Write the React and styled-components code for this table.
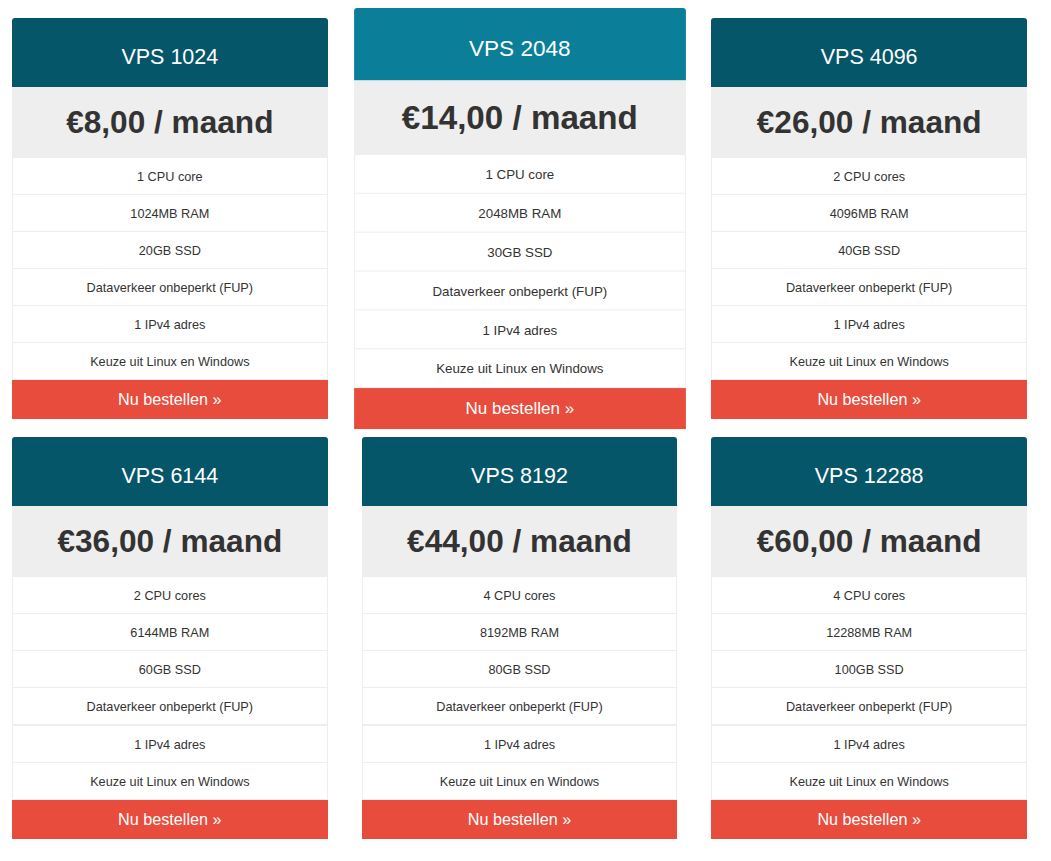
import React from "react";
import styled, { createGlobalStyle } from "styled-components";

const GlobalStyle = createGlobalStyle`
  html, body {
    margin: 0;
    padding: 0;
    background: #ffffff;
  }
  body {
    font-family: "Liberation Sans", Arial, Helvetica, sans-serif;
    color: #333333;
  }
`;

const Page = styled.div`
  width: 1051px;
  box-sizing: border-box;
  padding: 18px 24px 0 12px;
  display: grid;
  grid-template-columns: repeat(3, 1fr);
  column-gap: 34px;
  row-gap: 18px;
`;

const Card = styled.div`
  display: flex;
  flex-direction: column;
  transform: ${(p) => (p.$featured ? "scale(1.05)" : "none")};
  transform-origin: center center;
  position: relative;
  z-index: ${(p) => (p.$featured ? 1 : 0)};
`;

const Header = styled.div`
  background: ${(p) => (p.$featured ? "#0b7e9a" : "#065669")};
  border-radius: 3px 3px 0 0;
  color: #ffffff;
  text-align: center;
  font-size: 21.5px;
  line-height: 24px;
  padding: 27px 0 18px;
`;

const Price = styled.div`
  background: #eeeeee;
  text-align: center;
  font-size: 31.6px;
  font-weight: 700;
  line-height: 35px;
  padding: 18px 0;
  color: #333333;
`;

const Features = styled.ul`
  list-style: none;
  margin: 0;
  padding: 0;
  border-left: 1px solid #eeeeee;
  border-right: 1px solid #eeeeee;
`;

const Feature = styled.li`
  text-align: center;
  font-size: 12.7px;
  line-height: 20px;
  padding: 9px 0 7px;
  border-bottom: ${(p) => (p.$thick ? "2px" : "1px")} solid #eeeeee;
  color: #333333;
`;

const OrderButton = styled.a`
  display: block;
  background: #e74c3c;
  color: #ffffff;
  text-align: center;
  font-size: 16.2px;
  line-height: 23px;
  padding: 8px 0;
  text-decoration: none;
  cursor: pointer;
`;

const plans = [
  { name: "VPS 1024", price: "€8,00", cpu: "1 CPU core", ram: "1024MB RAM", ssd: "20GB SSD" },
  { name: "VPS 2048", price: "€14,00", cpu: "1 CPU core", ram: "2048MB RAM", ssd: "30GB SSD", featured: true },
  { name: "VPS 4096", price: "€26,00", cpu: "2 CPU cores", ram: "4096MB RAM", ssd: "40GB SSD" },
  { name: "VPS 6144", price: "€36,00", cpu: "2 CPU cores", ram: "6144MB RAM", ssd: "60GB SSD", thick: true },
  { name: "VPS 8192", price: "€44,00", cpu: "4 CPU cores", ram: "8192MB RAM", ssd: "80GB SSD", thick: true },
  { name: "VPS 12288", price: "€60,00", cpu: "4 CPU cores", ram: "12288MB RAM", ssd: "100GB SSD", thick: true },
];

function PlanCard({ plan }) {
  const items = [
    plan.cpu,
    plan.ram,
    plan.ssd,
    "Dataverkeer onbeperkt (FUP)",
    "1 IPv4 adres",
    "Keuze uit Linux en Windows",
  ];
  return (
    <Card $featured={plan.featured}>
      <Header $featured={plan.featured}>{plan.name}</Header>
      <Price>{plan.price} / maand</Price>
      <Features>
        {items.map((it, i) => (
          <Feature key={i} $thick={plan.thick && i === 3}>
            {it}
          </Feature>
        ))}
      </Features>
      <OrderButton>Nu bestellen »</OrderButton>
    </Card>
  );
}

export default function App() {
  return (
    <>
      <GlobalStyle />
      <Page>
        {plans.map((p) => (
          <PlanCard key={p.name} plan={p} />
        ))}
      </Page>
    </>
  );
}
